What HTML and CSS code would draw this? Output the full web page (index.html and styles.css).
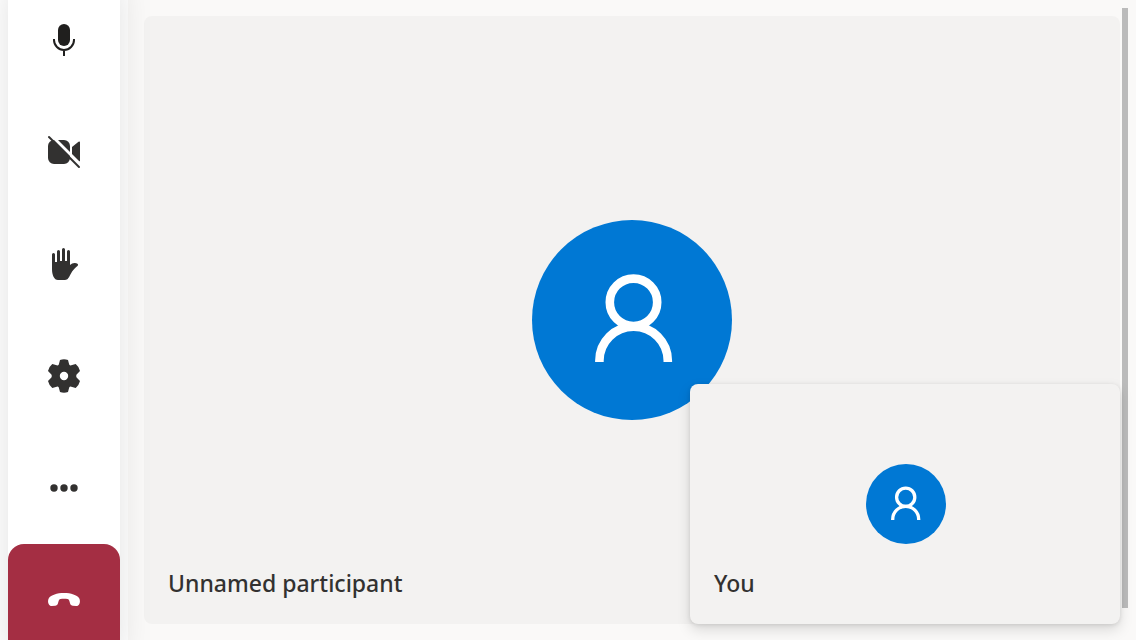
FILE: index.html
```
<!DOCTYPE html>
<html lang="en">
<head>
<meta charset="utf-8">
<title>Call</title>
<link rel="stylesheet" href="styles.css">
</head>
<body>
<div class="call">
  <nav class="controls" aria-label="Call controls">
    <button class="control" type="button" aria-label="Mute">
      <svg class="icon icon-mic" viewBox="0 0 32 32" aria-hidden="true"><rect x="10" y="0" width="12" height="22" rx="6" fill="currentColor"/><path d="M6 15v1a10 10 0 0 0 20 0v-1M16 26v6" fill="none" stroke="currentColor" stroke-width="2"/></svg>
    </button>
    <button class="control" type="button" aria-label="Turn on camera">
      <svg class="icon" viewBox="0 0 32 32" aria-hidden="true"><path d="M6 4h10a6 6 0 0 1 6 6v12a6 6 0 0 1-6 6H6a6 6 0 0 1-6-6V10a6 6 0 0 1 6-6zM24 11l6.500-5.200Q32 4.800 32 6.500v18q0 1.700-1.500.700L24 20z" fill="currentColor"/><path d="M3-1L34 30" stroke="#fff" stroke-width="2.800"/><path d="M1 1L31 31" stroke="currentColor" stroke-width="2" stroke-linecap="round"/></svg>
    </button>
    <button class="control" type="button" aria-label="Raise hand">
      <svg class="icon" viewBox="0 0 32 32" aria-hidden="true"><path d="M4 6.500a1.500 1.500 0 0 1 3 0V14h2V3.500a1.500 1.500 0 0 1 3 0V13h2V1.500a1.500 1.500 0 0 1 3 0V13h2V3.500a1.500 1.500 0 0 1 3 0V17c1.500-1.500 3-2.200 5-2.100 1.600.1 2.800.7 3 1.600.1 1-.8 1.700-1.800 2.600-2.200 1.800-3.700 3.900-5.200 6.400-2 3.600-3 6.500-6 6.500H10C6 32 4 27 4 21z" fill="currentColor"/></svg>
    </button>
    <button class="control" type="button" aria-label="Settings">
      <svg class="icon icon-gear" viewBox="-17 -17 34 34" aria-hidden="true"><path fill-rule="evenodd" d="M-4-16Q0-17.600 4-16L5.200-11.400Q6-10.200 7.300-10.700L11.700-12Q14.900-9.500 16-5L12.600-1.500Q11.700 0 12.600 1.500L16 5Q14.900 9.500 11.700 12L7.300 10.700Q6 10.200 5.200 11.400L4 16Q0 17.600-4 16L-5.200 11.400Q-6 10.200-7.300 10.700L-11.700 12Q-14.900 9.500-16 5L-12.600 1.500Q-11.700 0-12.600-1.500L-16-5Q-14.900-9.500-11.700-12L-7.300-10.700Q-6-10.200-5.200-11.400ZM0-4.200a4.200 4.200 0 1 0 0 8.400a4.200 4.200 0 1 0 0-8.400z" fill="currentColor"/></svg>
    </button>
    <button class="control" type="button" aria-label="More options">
      <svg class="icon" viewBox="0 0 32 32" aria-hidden="true"><g fill="currentColor"><circle cx="6" cy="16" r="3.700"/><circle cx="16" cy="16" r="3.700"/><circle cx="26" cy="16" r="3.700"/></g></svg>
    </button>
    <button class="control control-end" type="button" aria-label="Leave call">
      <svg class="icon" viewBox="0 0 32 32" aria-hidden="true"><path d="M16 9C9 9 3 11 .8 14.200-.3 16.200-.1 18.700.8 20.200c.6 1.200 1.700 1.900 3 1.800l3.400-.3c1.400-.2 2.300-1 2.700-2.300l.8-2.700c.3-.9.900-1.400 1.700-1.600 2.200-.5 5-.5 7.200 0 .8.200 1.400.7 1.700 1.600l.8 2.700c.4 1.300 1.300 2.100 2.700 2.300l3.400.3c1.300.1 2.400-.6 3-1.800.9-1.500 1.100-4 0-6C29 11 23 9 16 9z" fill="currentColor"/></svg>
    </button>
  </nav>
  <main class="stage">
    <section class="tile" aria-label="Unnamed participant">
      <div class="avatar avatar-large">
        <svg class="person" viewBox="0 0 200 200" aria-hidden="true"><g fill="none" stroke="#fff" stroke-width="8.600"><circle cx="101.500" cy="82.300" r="23.700"/><path d="M67.400 142v-1.200a34.200 34.200 0 0 1 68.400 0v1.200"/></g></svg>
      </div>
      <h1 class="name">Unnamed participant</h1>
    </section>
    <div class="scroll-thumb"></div>
    <section class="tile tile-local" aria-label="You">
      <div class="avatar">
        <svg class="person" viewBox="0 0 80 80" aria-hidden="true"><g fill="none" stroke="#fff" stroke-width="3.300"><circle cx="39.700" cy="33.200" r="9.100"/><path d="M26.700 56v-.6a13 13 0 0 1 26 0v.6"/></g></svg>
      </div>
      <h2 class="name">You</h2>
    </section>
  </main>
</div>
</body>
</html>
```
FILE: styles.css
```
* {
  box-sizing: border-box;
}

body {
  margin: 0;
  background: #fff;
  color: #323130;
  font-family: "Noto Sans", "Open Sans", sans-serif;
}

.call {
  display: flex;
  gap: 8px;
  height: 100vh;
  padding-left: 8px;
  overflow: hidden;
}

.controls {
  position: relative;
  z-index: 1;
  display: flex;
  flex: none;
  flex-direction: column;
  align-self: center;
  justify-content: center;
  width: 112px;
  min-height: 100vh;
  background: #fff;
  box-shadow: 0 0 32px rgba(0, 0, 0, 0.12);
}

.control {
  display: flex;
  flex: none;
  align-items: center;
  justify-content: center;
  height: 112px;
  padding: 0;
  border: 0;
  background: transparent;
  color: #323130;
}

.control-end {
  border-radius: 16px;
  background: #a42e43;
  color: #fff;
}

.icon {
  width: 32px;
  height: 32px;
  overflow: visible;
}

.icon-mic {
  color: #201f1e;
}

.icon-gear {
  width: 34px;
  height: 34px;
}

.stage {
  position: relative;
  display: flex;
  flex: 1;
  min-width: 0;
  padding: 16px;
  background: #faf9f8;
}

.tile {
  position: relative;
  display: flex;
  flex: 1;
  align-items: center;
  justify-content: center;
  border-radius: 8px;
  background: #f3f2f1;
}

.tile-local {
  position: absolute;
  right: 16px;
  bottom: 16px;
  width: 430px;
  height: 240px;
  padding-left: 2px;
  box-shadow: 0 6px 14px rgba(0, 0, 0, 0.13), 0 1px 4px rgba(0, 0, 0, 0.11);
}

.avatar {
  width: 80px;
  height: 80px;
  border-radius: 50%;
  background: #0078d4;
}

.avatar-large {
  width: 200px;
  height: 200px;
}

.person {
  display: block;
  width: 100%;
  height: 100%;
}

.name {
  position: absolute;
  bottom: 25px;
  left: 24px;
  margin: 0;
  font-size: 23px;
  font-weight: 500;
  line-height: 32px;
}

.scroll-thumb {
  position: absolute;
  top: 8px;
  right: 8px;
  bottom: 32px;
  width: 6px;
  background: #bbb;
}
```
